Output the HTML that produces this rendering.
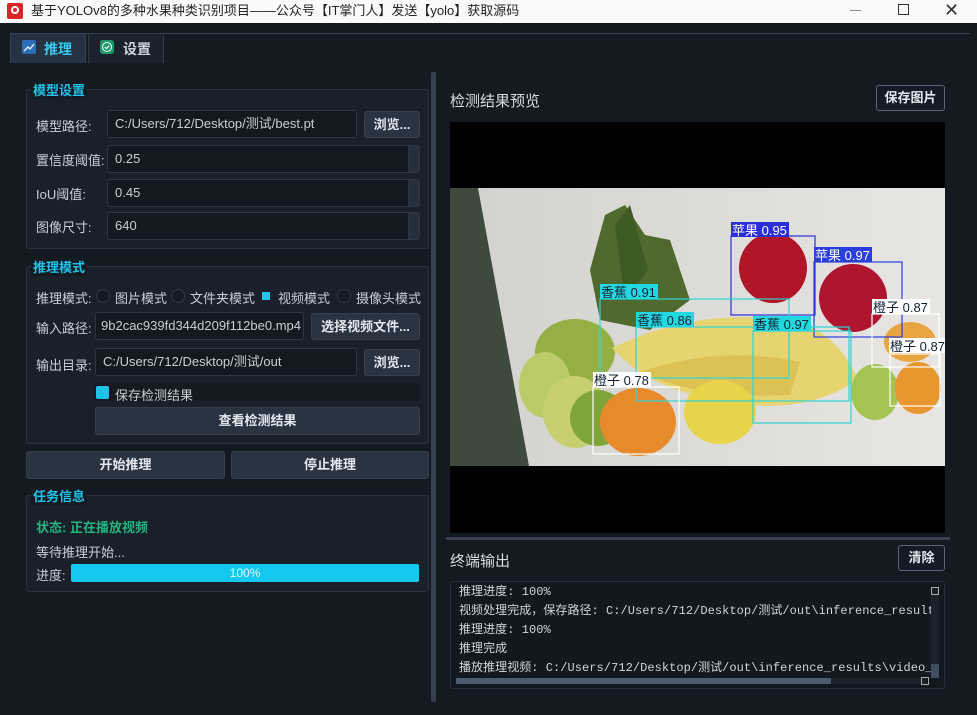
<!DOCTYPE html>
<html><head><meta charset="utf-8"><style>
*{margin:0;padding:0;box-sizing:border-box}
body{width:977px;height:715px;background:#141a21;font-family:"Liberation Sans","Noto Sans CJK SC",sans-serif;font-size:13px;color:#d0d6de;position:relative;overflow:hidden}
.a{position:absolute}
.tb{left:0;top:0;width:977px;height:23px;background:#fafafa;color:#222;font-size:13px}
.grp{border:1px solid #2a333f;border-radius:3px;background:#19202a}
.gt{color:#1fc3ea;font-weight:bold;font-size:13px;background:#141a21;padding:0 2px}
.lbl{color:#c8ced6}
.in{background:#131920;border:1px solid #2d3744;border-radius:3px;color:#c8ced6;padding-left:7px;line-height:26px;height:28px;overflow:hidden;white-space:nowrap}
.btn{background:#2a3441;border:1px solid #34404e;border-radius:3px;color:#e4e8ee;text-align:center;font-weight:bold}
.sp{background:#26303c}
.rad{width:14px;height:14px;border-radius:50%;border:1px solid #2f3946;background:#151b22}
.mono{font-family:"Liberation Mono","Noto Sans CJK SC",monospace;font-size:12px;color:#cfd4da;line-height:19px;white-space:nowrap}
</style></head><body>
<div class="a tb">
 <div class="a" style="left:7px;top:3px;width:16px;height:16px;background:#d9262b;border-radius:2px"></div>
 <div class="a" style="left:11px;top:6px;width:8px;height:8px;border:2px solid #fff;border-radius:50%"></div>
 <div class="a" style="left:31px;top:3px;line-height:16px">基于YOLOv8的多种水果种类识别项目——公众号【IT掌门人】发送【yolo】获取源码</div>
 <div class="a" style="left:850px;top:10px;width:11px;height:1px;background:#888"></div>
 <div class="a" style="left:898px;top:4px;width:11px;height:11px;border:1.5px solid #333"></div>
 <div class="a" style="left:944px;top:0px;font-size:18px;color:#333;line-height:20px">✕</div>
</div>
<div class="a" style="left:10px;top:33px;width:960px;height:1px;background:#3a4554"></div>
<div class="a" style="left:10px;top:33px;width:76px;height:30px;background:#253241;border:1px solid #34404e;border-bottom:none;border-radius:3px 3px 0 0"></div>
<div class="a" style="left:22px;top:40px;width:14px;height:14px;background:#2a6fb8;border-radius:2px"></div>
<svg class="a" style="left:22px;top:40px" width="14" height="14"><path d="M2 11 L6 7 L8 9 L12 4" stroke="#e6f2ff" stroke-width="1.4" fill="none"/></svg>
<div class="a" style="left:44px;top:39px;color:#39c8f0;font-weight:bold;font-size:14px">推理</div>
<div class="a" style="left:88px;top:33px;width:76px;height:30px;background:#1a222c;border:1px solid #2f3a47;border-bottom:none"></div>
<div class="a" style="left:100px;top:40px;width:14px;height:14px;background:#1d9a6c;border-radius:3px"></div>
<svg class="a" style="left:100px;top:40px" width="14" height="14"><circle cx="7" cy="7" r="4.5" stroke="#fff" stroke-width="1" fill="none"/><path d="M4.8 7 L6.5 8.6 L9.3 5.6" stroke="#fff" stroke-width="1.2" fill="none"/></svg>
<div class="a" style="left:123px;top:39px;color:#cdd3da;font-weight:bold;font-size:14px">设置</div>
<div class="a" style="left:431px;top:72px;width:5px;height:630px;background:#36414f;border-radius:2px"></div>

<div class="a grp" style="left:26px;top:89px;width:403px;height:160px"></div>
<div class="a gt" style="left:31px;top:80px">模型设置</div>
<div class="a lbl" style="left:36px;top:116px">模型路径:</div>
<div class="a in" style="left:107px;top:110px;width:250px">C:/Users/712/Desktop/测试/best.pt</div>
<div class="a btn" style="left:364px;top:111px;width:56px;height:27px;line-height:25px">浏览...</div>
<div class="a lbl" style="left:36px;top:150px">置信度阈值:</div>
<div class="a in" style="left:107px;top:145px;width:313px">0.25</div>
<div class="a sp" style="left:408px;top:146px;width:11px;height:26px;border-left:1px solid #2d3744"></div>
<div class="a lbl" style="left:36px;top:184px">IoU阈值:</div>
<div class="a in" style="left:107px;top:179px;width:313px">0.45</div>
<div class="a sp" style="left:408px;top:180px;width:11px;height:26px;border-left:1px solid #2d3744"></div>
<div class="a lbl" style="left:36px;top:217px">图像尺寸:</div>
<div class="a in" style="left:107px;top:212px;width:313px">640</div>
<div class="a sp" style="left:408px;top:213px;width:11px;height:26px;border-left:1px solid #2d3744"></div>

<div class="a grp" style="left:26px;top:266px;width:403px;height:178px"></div>
<div class="a gt" style="left:31px;top:257px">推理模式</div>
<div class="a lbl" style="left:36px;top:288px">推理模式:</div>
<div class="a rad" style="left:96px;top:289px"></div><div class="a lbl" style="left:115px;top:288px">图片模式</div>
<div class="a rad" style="left:171px;top:289px"></div><div class="a lbl" style="left:190px;top:288px">文件夹模式</div>
<div class="a" style="left:262px;top:292px;width:8px;height:8px;background:#1fc3ea"></div><div class="a lbl" style="left:278px;top:288px">视频模式</div>
<div class="a rad" style="left:337px;top:289px"></div><div class="a lbl" style="left:356px;top:288px">摄像头模式</div>
<div class="a lbl" style="left:36px;top:318px">输入路径:</div>
<div class="a in" style="left:95px;top:312px;width:209px;padding-left:5px">9b2cac939fd344d209f112be0.mp4</div>
<div class="a btn" style="left:311px;top:313px;width:109px;height:27px;line-height:25px">选择视频文件...</div>
<div class="a lbl" style="left:36px;top:355px">输出目录:</div>
<div class="a in" style="left:95px;top:348px;width:262px">C:/Users/712/Desktop/测试/out</div>
<div class="a btn" style="left:364px;top:349px;width:56px;height:27px;line-height:25px">浏览...</div>
<div class="a" style="left:95px;top:383px;width:325px;height:18px;background:#141a21"></div>
<div class="a" style="left:96px;top:386px;width:13px;height:13px;background:#1fc3ea;border-radius:2px"></div>
<div class="a lbl" style="left:115px;top:385px">保存检测结果</div>
<div class="a btn" style="left:95px;top:407px;width:325px;height:28px;line-height:26px">查看检测结果</div>

<div class="a btn" style="left:26px;top:451px;width:199px;height:28px;line-height:26px">开始推理</div>
<div class="a btn" style="left:231px;top:451px;width:198px;height:28px;line-height:26px">停止推理</div>

<div class="a grp" style="left:26px;top:495px;width:403px;height:97px"></div>
<div class="a gt" style="left:31px;top:486px">任务信息</div>
<div class="a" style="left:36px;top:517px;color:#1fb67f;font-weight:bold">状态: 正在播放视频</div>
<div class="a lbl" style="left:36px;top:542px">等待推理开始...</div>
<div class="a lbl" style="left:36px;top:565px">进度:</div>
<div class="a" style="left:71px;top:564px;width:348px;height:18px;background:#14c8f0;border-radius:2px;text-align:center;color:#e8f8ff;line-height:18px;font-size:12px">100%</div>

<div class="a" style="left:450px;top:90px;font-size:15px;color:#d7dce2">检测结果预览</div>
<div class="a btn" style="left:876px;top:85px;width:69px;height:26px;line-height:24px;background:#131b26;border:1px solid #5a6675;font-size:13px">保存图片</div>
<div class="a" style="left:450px;top:122px;width:495px;height:411px;background:#000"></div>
<svg class="a" style="left:450px;top:188px" width="495" height="278" viewBox="450 188 495 278">
 <defs><linearGradient id="w" x1="0" x2="1" y1="0" y2="0"><stop offset="0" stop-color="#d2d2cf"/><stop offset="1" stop-color="#e8e6e2"/></linearGradient></defs>
 <rect x="450" y="188" width="495" height="278" fill="#3e4a3e"/>
 <polygon points="478,188 945,188 945,466 529,466" fill="url(#w)"/>
 <polygon points="590,270 605,215 625,205 645,235 670,240 690,300 650,330 600,320" fill="#50692f"/>
 <polygon points="615,225 630,205 648,270 625,300" fill="#3f5b24"/>
 <ellipse cx="773" cy="268" rx="34" ry="35" fill="#b11528"/>
 <ellipse cx="853" cy="298" rx="34" ry="34" fill="#b01530"/>
 <ellipse cx="575" cy="352" rx="40" ry="33" fill="#94b044"/>
 <ellipse cx="545" cy="385" rx="26" ry="33" fill="#bccb6a"/>
 <ellipse cx="575" cy="412" rx="32" ry="36" fill="#c8cf70"/>
 <ellipse cx="598" cy="418" rx="28" ry="28" fill="#7fa53a"/>
 <path d="M612 348 Q700 305 800 322 Q840 337 858 380 Q800 418 720 400 Q650 390 612 348Z" fill="#e6d470"/>
 <path d="M640 372 Q720 345 800 362 L790 395 Q700 400 640 372Z" fill="#dcc253"/>
 <ellipse cx="638" cy="422" rx="38" ry="34" fill="#e78a2c"/>
 <ellipse cx="720" cy="412" rx="36" ry="32" fill="#e8d44a"/>
 <ellipse cx="875" cy="392" rx="24" ry="28" fill="#a4c352"/>
 <ellipse cx="918" cy="388" rx="23" ry="26" fill="#e79630"/>
 <ellipse cx="910" cy="342" rx="26" ry="20" fill="#e9a640"/>
 <g fill="none" stroke-width="1.2">
  <rect x="731" y="236" width="84" height="79" stroke="#2a2fd8"/>
  <rect x="814" y="262" width="88" height="75" stroke="#2a3ee0"/>
  <rect x="600" y="299" width="189" height="79" stroke="#2fd5d5"/>
  <rect x="636" y="327" width="213" height="74" stroke="#2fd5d5"/>
  <rect x="753" y="331" width="98" height="92" stroke="#2fd5d5"/>
  <rect x="593" y="387" width="86" height="67" stroke="#fff"/>
  <rect x="872" y="314" width="67" height="53" stroke="#fff"/>
  <rect x="890" y="354" width="50" height="52" stroke="#fff"/>
 </g>
 <g font-family="Liberation Sans,Noto Sans CJK SC,sans-serif" font-size="13">
  <rect x="731" y="222" width="58" height="15" fill="#2a2fd8"/><text x="732" y="235" fill="#fff">苹果 0.95</text>
  <rect x="814" y="247" width="58" height="15" fill="#2a3ee0"/><text x="815" y="260" fill="#fff">苹果 0.97</text>
  <rect x="600" y="284" width="58" height="15" fill="#22d8e0"/><text x="601" y="297" fill="#123">香蕉 0.91</text>
  <rect x="636" y="312" width="58" height="15" fill="#22d8e0"/><text x="637" y="325" fill="#123">香蕉 0.86</text>
  <rect x="753" y="316" width="58" height="15" fill="#22d8e0"/><text x="754" y="329" fill="#123">香蕉 0.97</text>
  <rect x="593" y="372" width="58" height="15" fill="#fff"/><text x="594" y="385" fill="#123">橙子 0.78</text>
  <rect x="872" y="299" width="58" height="15" fill="#fff"/><text x="873" y="312" fill="#123">橙子 0.87</text>
  <rect x="889" y="338" width="58" height="15" fill="#fff"/><text x="890" y="351" fill="#123">橙子 0.87</text>
 </g>
</svg>
<div class="a" style="left:446px;top:537px;width:504px;height:3px;background:#36414f"></div>
<div class="a" style="left:450px;top:550px;font-size:15px;color:#d7dce2">终端输出</div>
<div class="a btn" style="left:898px;top:545px;width:47px;height:26px;line-height:24px;background:#131b26;border:1px solid #5a6675">清除</div>
<div class="a" style="left:450px;top:581px;width:495px;height:108px;background:#111820;border:1px solid #26303c;border-radius:3px;overflow:hidden">
 <div class="a mono" style="left:8px;top:1px;width:472px;overflow:hidden;letter-spacing:0.05px">推理进度: 100%<br>视频处理完成，保存路径: C:/Users/712/Desktop/测试/out\inference_results<br>推理进度: 100%<br>推理完成<br>播放推理视频: C:/Users/712/Desktop/测试/out\inference_results\video_ou</div>
 <div class="a" style="left:480px;top:5px;width:8px;height:90px;background:#1a222c"></div>
 <div class="a" style="left:480px;top:82px;width:8px;height:14px;background:#3f4d5e"></div>
 <div class="a" style="left:480px;top:5px;width:8px;height:8px;border:1px solid #aaa"></div>
 <div class="a" style="left:5px;top:96px;width:470px;height:6px;background:#1a222c"></div>
 <div class="a" style="left:5px;top:96px;width:375px;height:6px;background:#4d5b6c"></div>
 <div class="a" style="left:470px;top:95px;width:8px;height:8px;border:1px solid #aaa"></div>
</div>
</body></html>
